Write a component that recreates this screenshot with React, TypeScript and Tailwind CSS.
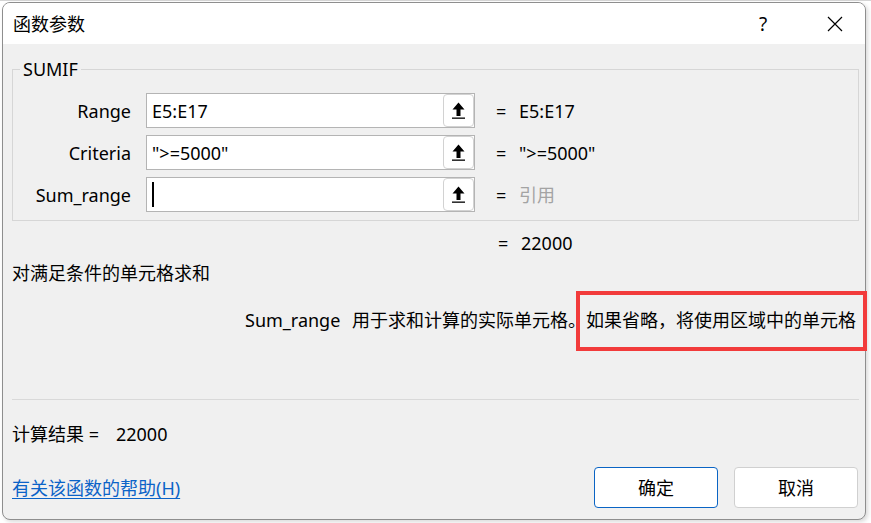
import React from 'react';

const FONT = "font-['Noto_Sans','Noto_Sans_CJK_SC',sans-serif]";

function RefIcon() {
    return (
        <svg width="14" height="17" viewBox="0 0 14 17">
            <path d="M6.5 0.5 L12.5 7.5 H8.5 V14 H4.5 V7.5 H0.5 Z" fill="#000" />
            <rect x="0" y="15.5" width="13" height="1.3" fill="#000" />
        </svg>
    );
}

function ArgRow({ label, value, result, muted, cursor }: { label: string, value: string, result: string, muted?: boolean, cursor?: boolean }) {
    return (
        <div className="flex items-center h-[35px]">
            <div className="w-[118px] text-right">{label}</div>
            <div className="ml-[15px] w-[329px] h-[35px] bg-white border border-[#b4b4b4] flex items-center">
                <div className="flex-1 pl-[5px] flex items-center whitespace-pre">
                    {cursor && <span className="inline-block w-[1.5px] h-[25px] bg-black" />}
                    {value}
                </div>
                <button className="w-[31px] h-[33px] bg-white border border-[#d2d2d2] rounded-[4px] flex items-center justify-center">
                    <RefIcon />
                </button>
            </div>
            <div className="ml-[21px] w-[23px]">=</div>
            <div className={muted ? 'text-[#a3a3a3]' : ''}>{result}</div>
        </div>
    );
}

export default function App() {
    return (
        <div className={`w-[871px] h-[523px] bg-white relative overflow-hidden ${FONT} text-[18px] leading-[24px] text-black`}>
            <div className="absolute inset-x-0 top-0 h-[1px] bg-[#d4d4d4]" />
            <div className="ml-[2px] mt-[2px] w-[864px] h-[518px] border border-[#8e8e8e] rounded-[8px] overflow-hidden bg-[#f0f0f0] flex flex-col shadow-[2px_2px_4px_rgba(0,0,0,0.15)]">
                {/* Title bar */}
                <div className="h-[41px] bg-white flex items-center shrink-0">
                    <div className="pl-[10px] flex-1">函数参数</div>
                    <div className="w-[14px] text-[19px] text-center">?</div>
                    <div className="ml-[57px] mr-[22px] flex items-center">
                        <svg width="16" height="16" viewBox="0 0 16 16">
                            <path d="M1 1 L15 15 M15 1 L1 15" stroke="#000" strokeWidth="1.2" />
                        </svg>
                    </div>
                </div>

                {/* Body */}
                <div className="flex-1 flex flex-col px-[9px]">
                    <fieldset className="mt-[13px] border border-[#d6d6d6] w-[847px] pb-[8px]">
                        <legend className="ml-[7px] px-[3px]">SUMIF</legend>
                        <div className="pt-[12px] flex flex-col gap-[7px]">
                            <ArgRow label="Range" value="E5:E17" result="E5:E17" />
                            <ArgRow label="Criteria" value={'">=5000"'} result={'">=5000"'} />
                            <ArgRow label="Sum_range" value="" result="引用" muted cursor />
                        </div>
                    </fieldset>

                    <div className="mt-[10px] flex pl-[486px]">
                        <span className="w-[23px]">=</span>
                        <span>22000</span>
                    </div>

                    <div className="mt-[6px]">对满足条件的单元格求和</div>

                    <div className="mt-[23px] flex pl-[233px] whitespace-nowrap">
                        <span className="w-[111px]">Sum_range</span>
                        <span>用于求和计算的实际单元格。如果省略，将使用区域中的单元格</span>
                    </div>

                    <div className="mt-[67px] h-[1px] bg-[#d9d9d9] w-[847px]" />

                    <div className="mt-[22px] flex">
                        <span>计算结果 =</span>
                        <span className="ml-[17px]">22000</span>
                    </div>

                    <div className="mt-[21px] mr-[-2px] flex items-center">
                        <a href="#" className="text-[#0b63c8] underline underline-offset-[3px] flex-1">有关该函数的帮助(H)</a>
                        <button className="w-[124px] h-[41px] bg-white border border-[#0a64c4] rounded-[4px]">确定</button>
                        <button className="ml-[16px] w-[124px] h-[41px] bg-white border border-[#d0d0d0] rounded-[4px]">取消</button>
                    </div>
                </div>
            </div>

            {/* Annotation box */}
            <div className="absolute left-[576px] top-[291px] w-[291px] h-[60px] border-[4px] border-[#f23b3b]" />
        </div>
    );
}
